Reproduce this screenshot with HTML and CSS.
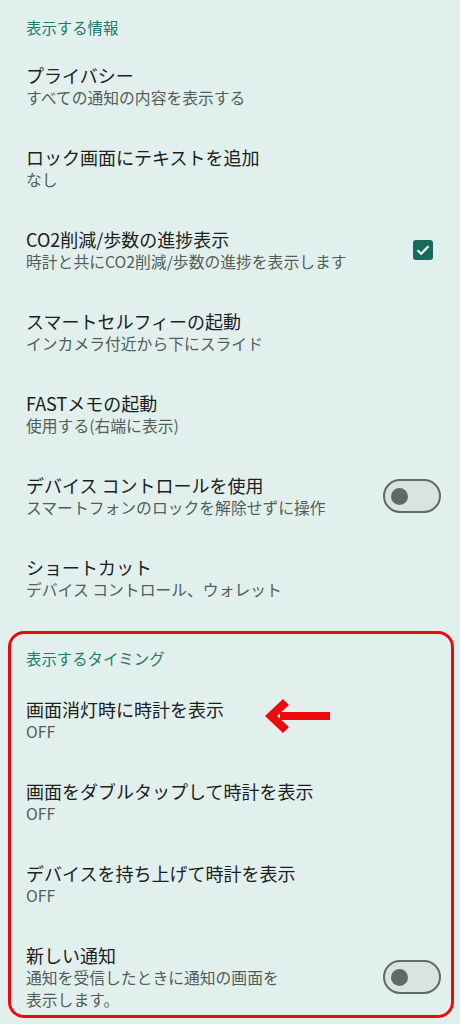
FILE: index.html
```html
<!DOCTYPE html>
<html lang="ja">
<head>
  <meta charset="UTF-8" />
  <title>ロック画面</title>
  <meta name="viewport" content="width=device-width, initial-scale=1.0" />
  <link rel="stylesheet" href="styles.css">
</head>
<body>
  <div class="screen">
    <div class="section-head first">表示する情報</div>

    <div class="row">
      <div class="text">
        <div class="title">プライバシー</div>
        <div class="sub">すべての通知の内容を表示する</div>
      </div>
    </div>

    <div class="row">
      <div class="text">
        <div class="title">ロック画面にテキストを追加</div>
        <div class="sub">なし</div>
      </div>
    </div>

    <div class="row">
      <div class="text">
        <div class="title">CO2削減/歩数の進捗表示</div>
        <div class="sub">時計と共にCO2削減/歩数の進捗を表示します</div>
      </div>
      <div class="checkbox">
        <svg width="14" height="12" viewBox="0 0 14 12"><path d="M1.5 6.2 L5.2 9.8 L12.5 2.2" fill="none" stroke="#fff" stroke-width="2.2"/></svg>
      </div>
    </div>

    <div class="row">
      <div class="text">
        <div class="title">スマートセルフィーの起動</div>
        <div class="sub">インカメラ付近から下にスライド</div>
      </div>
    </div>

    <div class="row">
      <div class="text">
        <div class="title">FASTメモの起動</div>
        <div class="sub">使用する(右端に表示)</div>
      </div>
    </div>

    <div class="row">
      <div class="text">
        <div class="title">デバイス コントロールを使用</div>
        <div class="sub">スマートフォンのロックを解除せずに操作</div>
      </div>
      <div class="switch"><span class="knob"></span></div>
    </div>

    <div class="row">
      <div class="text">
        <div class="title">ショートカット</div>
        <div class="sub">デバイス コントロール、ウォレット</div>
      </div>
    </div>

    <div class="section-head">表示するタイミング</div>

    <div class="row">
      <div class="text">
        <div class="title">画面消灯時に時計を表示</div>
        <div class="sub">OFF</div>
      </div>
    </div>

    <div class="row">
      <div class="text">
        <div class="title">画面をダブルタップして時計を表示</div>
        <div class="sub">OFF</div>
      </div>
    </div>

    <div class="row">
      <div class="text">
        <div class="title">デバイスを持ち上げて時計を表示</div>
        <div class="sub">OFF</div>
      </div>
    </div>

    <div class="row">
      <div class="text">
        <div class="title">新しい通知</div>
        <div class="sub">通知を受信したときに通知の画面を<br>表示します。</div>
      </div>
      <div class="switch"><span class="knob"></span></div>
    </div>

    <!-- annotation overlay -->
    <div class="mark-box"></div>
    <svg class="mark-arrow" width="68" height="36" viewBox="0 0 68 36">
      <path d="M66 14 H16 V22 H66 Z" fill="#ee0a0a"/>
      <path d="M19 1 L25 7 L13 18 L25 29 L19 35 L1 18 Z" fill="#ee0a0a"/>
    </svg>
  </div>
</body>
</html>
```

FILE: styles.css
```css
body {
  margin: 0;
  background-color: #e2f0ed;
  font-family: "Noto Sans CJK JP", "Noto Sans", sans-serif;
}
.screen {
  position: relative;
  width: 460px;
  height: 1024px;
  overflow: hidden;
}
.section-head {
  padding: 26px 26px 12px;
  font-size: 15.4px;
  line-height: 22px;
  color: #1e7a6c;
}
.section-head.first {
  padding-top: 16px;
  padding-bottom: 9px;
}
.row {
  display: flex;
  align-items: center;
  padding: 16px 19px 20px 26px;
}
.text {
  flex: 1;
}
.title {
  font-size: 18px;
  line-height: 24px;
  color: #1b201f;
}
.sub {
  font-size: 15.8px;
  line-height: 22px;
  color: #525d5a;
}
.checkbox {
  width: 20px;
  height: 20px;
  margin-right: 8px;
  border-radius: 3px;
  background-color: #19695c;
  display: flex;
  align-items: center;
  justify-content: center;
}
.switch {
  box-sizing: border-box;
  width: 58px;
  height: 34px;
  border: 2.5px solid #5e6b68;
  border-radius: 17px;
  background-color: #d7e4e1;
  display: flex;
  align-items: center;
  padding-left: 6px;
}
.knob {
  width: 17px;
  height: 17px;
  border-radius: 50%;
  background-color: #5d6b67;
}
.mark-box {
  position: absolute;
  left: 8px;
  top: 631px;
  width: 440px;
  height: 381px;
  border: 3px solid #ee0a0a;
  border-radius: 16px;
}
.mark-arrow {
  position: absolute;
  left: 264px;
  top: 698px;
}
```
